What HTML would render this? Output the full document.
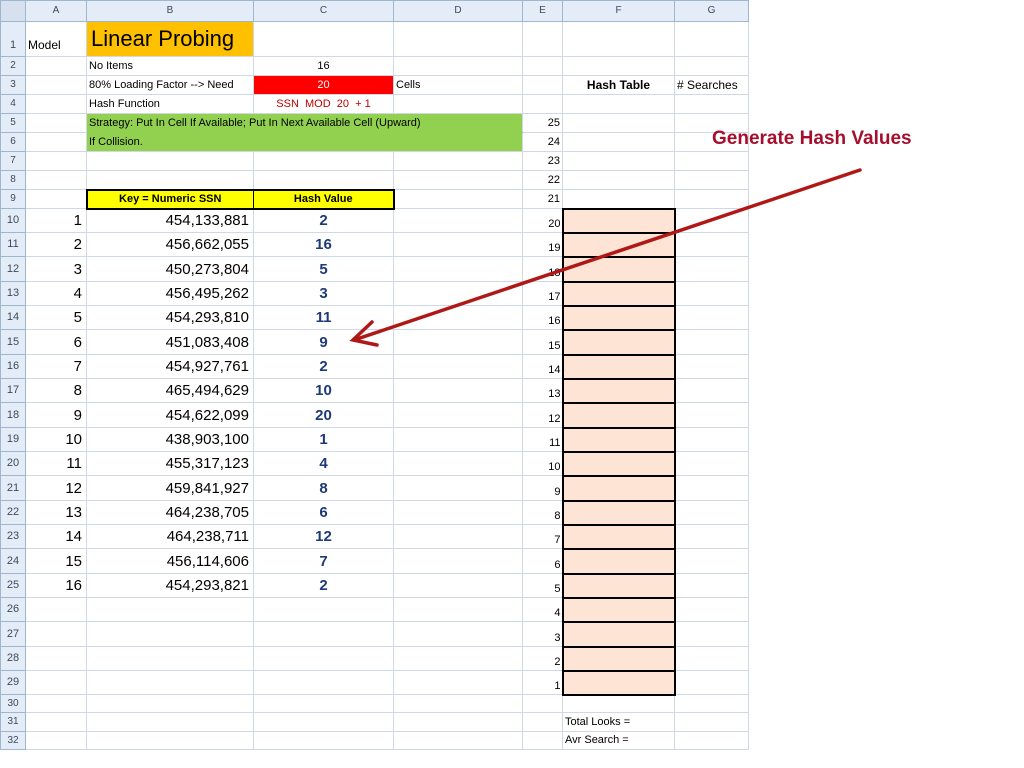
<!DOCTYPE html>
<html><head><meta charset="utf-8"><style>
body{margin:0;width:1024px;height:768px;background:#fff;overflow:hidden;font-family:"Liberation Sans",sans-serif;position:relative}
table{position:absolute;left:0;top:0;border-collapse:collapse;table-layout:fixed;width:748px}
td{border:1px solid #d0d7e5;padding:0 2px;font-size:11px;color:#000;white-space:nowrap;overflow:visible;line-height:1}
td.h{background:#e4ecf7;color:#3b4a60;text-align:center;font-size:10px;border-color:#9eb6ce}
tr.hd td{background:#e4ecf7;text-align:center;color:#3b4a60;font-size:10px;border-color:#9eb6ce;height:20px}
.r{text-align:right}.c{text-align:center}
.big td{font-size:15px}
.big td.h{font-size:11px}
.big td.r{padding-right:4px}
.hv{color:#1f3a78;font-weight:bold;text-align:center}
.pk{background:#fde4d4;border:2px solid #000!important}
.big td.e{text-align:right;font-size:11px;vertical-align:bottom;padding-bottom:2px;padding-right:1px}
</style></head><body>
<table>
<colgroup><col style="width:25px"><col style="width:61px"><col style="width:167px"><col style="width:140px"><col style="width:129px"><col style="width:40px"><col style="width:112px"><col style="width:74px"></colgroup>
<tr class="hd"><td style="background:#d6e0ee"></td><td>A</td><td>B</td><td>C</td><td>D</td><td>E</td><td>F</td><td>G</td></tr>
<tr style="height:35px"><td class="h" style="font-size:11px;vertical-align:bottom;padding-bottom:5px">1</td><td style="vertical-align:bottom;padding-bottom:5px;font-size:12px">Model</td><td style="background:#ffc000;font-size:22px;padding-left:4px">Linear Probing</td><td></td><td></td><td></td><td></td><td></td></tr>
<tr style="height:19px"><td class="h">2</td><td></td><td>No Items</td><td class="c">16</td><td></td><td></td><td></td><td></td></tr>
<tr style="height:19px"><td class="h">3</td><td></td><td>80% Loading Factor --&gt; Need</td><td class="c" style="background:#ff0000;color:#fff">20</td><td>Cells</td><td></td><td class="c" style="font-weight:bold;font-size:12px">Hash Table</td><td style="font-size:12px"># Searches</td></tr>
<tr style="height:19px"><td class="h">4</td><td></td><td>Hash Function</td><td class="c" style="color:#c00000">SSN&nbsp; MOD&nbsp; 20&nbsp; + 1</td><td></td><td></td><td></td><td></td></tr>
<tr style="height:19px"><td class="h">5</td><td></td><td colspan="3" style="background:#92d050;border-bottom-color:#92d050">Strategy: Put In Cell If Available; Put In Next Available Cell (Upward)</td><td class="r">25</td><td></td><td></td></tr>
<tr style="height:19px"><td class="h">6</td><td></td><td colspan="3" style="background:#92d050">If Collision.</td><td class="r">24</td><td></td><td></td></tr>
<tr style="height:19px"><td class="h">7</td><td></td><td></td><td></td><td></td><td class="r">23</td><td></td><td></td></tr>
<tr style="height:19px"><td class="h">8</td><td></td><td></td><td></td><td></td><td class="r">22</td><td></td><td></td></tr>
<tr style="height:19px"><td class="h">9</td><td></td><td class="c" style="background:#ffff00;font-weight:bold;border:2px solid #000;border-right:1px solid #000">Key = Numeric SSN</td><td class="c" style="background:#ffff00;font-weight:bold;border:2px solid #000;border-left:0">Hash Value</td><td></td><td class="r">21</td><td></td><td></td></tr>
<tr class="big" style="height:24px"><td class="h">10</td><td class="r">1</td><td class="r">454,133,881</td><td class="hv">2</td><td></td><td class="e">20</td><td class="pk"></td><td></td></tr>
<tr class="big" style="height:24px"><td class="h">11</td><td class="r">2</td><td class="r">456,662,055</td><td class="hv">16</td><td></td><td class="e">19</td><td class="pk"></td><td></td></tr>
<tr class="big" style="height:25px"><td class="h">12</td><td class="r">3</td><td class="r">450,273,804</td><td class="hv">5</td><td></td><td class="e">18</td><td class="pk"></td><td></td></tr>
<tr class="big" style="height:24px"><td class="h">13</td><td class="r">4</td><td class="r">456,495,262</td><td class="hv">3</td><td></td><td class="e">17</td><td class="pk"></td><td></td></tr>
<tr class="big" style="height:24px"><td class="h">14</td><td class="r">5</td><td class="r">454,293,810</td><td class="hv">11</td><td></td><td class="e">16</td><td class="pk"></td><td></td></tr>
<tr class="big" style="height:25px"><td class="h">15</td><td class="r">6</td><td class="r">451,083,408</td><td class="hv">9</td><td></td><td class="e">15</td><td class="pk"></td><td></td></tr>
<tr class="big" style="height:24px"><td class="h">16</td><td class="r">7</td><td class="r">454,927,761</td><td class="hv">2</td><td></td><td class="e">14</td><td class="pk"></td><td></td></tr>
<tr class="big" style="height:24px"><td class="h">17</td><td class="r">8</td><td class="r">465,494,629</td><td class="hv">10</td><td></td><td class="e">13</td><td class="pk"></td><td></td></tr>
<tr class="big" style="height:25px"><td class="h">18</td><td class="r">9</td><td class="r">454,622,099</td><td class="hv">20</td><td></td><td class="e">12</td><td class="pk"></td><td></td></tr>
<tr class="big" style="height:24px"><td class="h">19</td><td class="r">10</td><td class="r">438,903,100</td><td class="hv">1</td><td></td><td class="e">11</td><td class="pk"></td><td></td></tr>
<tr class="big" style="height:24px"><td class="h">20</td><td class="r">11</td><td class="r">455,317,123</td><td class="hv">4</td><td></td><td class="e">10</td><td class="pk"></td><td></td></tr>
<tr class="big" style="height:25px"><td class="h">21</td><td class="r">12</td><td class="r">459,841,927</td><td class="hv">8</td><td></td><td class="e">9</td><td class="pk"></td><td></td></tr>
<tr class="big" style="height:24px"><td class="h">22</td><td class="r">13</td><td class="r">464,238,705</td><td class="hv">6</td><td></td><td class="e">8</td><td class="pk"></td><td></td></tr>
<tr class="big" style="height:24px"><td class="h">23</td><td class="r">14</td><td class="r">464,238,711</td><td class="hv">12</td><td></td><td class="e">7</td><td class="pk"></td><td></td></tr>
<tr class="big" style="height:25px"><td class="h">24</td><td class="r">15</td><td class="r">456,114,606</td><td class="hv">7</td><td></td><td class="e">6</td><td class="pk"></td><td></td></tr>
<tr class="big" style="height:24px"><td class="h">25</td><td class="r">16</td><td class="r">454,293,821</td><td class="hv">2</td><td></td><td class="e">5</td><td class="pk"></td><td></td></tr>
<tr class="big" style="height:24px"><td class="h">26</td><td></td><td></td><td></td><td></td><td class="e">4</td><td class="pk"></td><td></td></tr>
<tr class="big" style="height:25px"><td class="h">27</td><td></td><td></td><td></td><td></td><td class="e">3</td><td class="pk"></td><td></td></tr>
<tr class="big" style="height:24px"><td class="h">28</td><td></td><td></td><td></td><td></td><td class="e">2</td><td class="pk"></td><td></td></tr>
<tr class="big" style="height:24px"><td class="h">29</td><td></td><td></td><td></td><td></td><td class="e">1</td><td class="pk"></td><td></td></tr>
<tr style="height:18px"><td class="h">30</td><td></td><td></td><td></td><td></td><td></td><td></td><td></td></tr>
<tr style="height:19px"><td class="h">31</td><td></td><td></td><td></td><td></td><td></td><td>Total Looks =</td><td></td></tr>
<tr style="height:18px"><td class="h">32</td><td></td><td></td><td></td><td></td><td></td><td>Avr Search =</td><td></td></tr>
</table>
<div style="position:absolute;left:712px;top:128px;font-size:19px;font-weight:bold;color:#a50f2d">Generate Hash Values</div>
<svg style="position:absolute;left:0;top:0" width="1024" height="768"><g stroke="#b01818" stroke-width="3.5" fill="none" stroke-linecap="round"><line x1="860" y1="170" x2="354" y2="340"/><polyline points="372,322 353,340 377,345"/></g></svg>
</body></html>
